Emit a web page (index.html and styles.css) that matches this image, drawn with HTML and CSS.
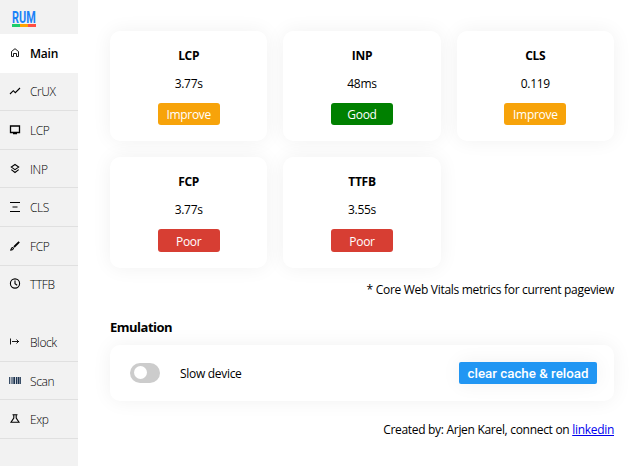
FILE: index.html
```html
<!DOCTYPE html>
<html lang="en">
<head>
  <meta charset="UTF-8" />
  <title>RUM</title>
  <link rel="stylesheet" href="styles.css">
</head>
<body>
  <nav class="sidebar">
    <div class="logo">
      <span class="logo-text">RUM</span>
      <span class="logo-bar"></span>
    </div>
    <a class="item active">
      <svg viewBox="0 0 12 12"><path d="M2.5 9.5V4.5L6 1.7L9.5 4.5v5H7.5V6.5h-3v3z" class="thin"/></svg>
      <span>Main</span>
    </a>
    <a class="item">
      <svg viewBox="0 0 12 12"><path d="M1 9l3.3-3.3l2 2L11 3"/></svg>
      <span>CrUX</span>
    </a>
    <a class="item">
      <svg viewBox="0 0 12 12"><path d="M1.5 2h9v6.5h-9zM4 9.6h4" class="mid"/></svg>
      <span>LCP</span>
    </a>
    <a class="item">
      <svg viewBox="0 0 12 12"><path d="M6 1.5l3.7 2.6l-3.7 2.6l-3.7-2.6zM2.3 6.6L6 9.5l3.7-2.9"/></svg>
      <span>INP</span>
    </a>
    <a class="item">
      <svg viewBox="0 0 12 12"><path d="M1 1.5h10M3.5 6h5M1 10.5h10"/></svg>
      <span>CLS</span>
    </a>
    <a class="item">
      <svg viewBox="0 0 12 12"><path d="M5 7l5.2-5.2" class="thick"/><path d="M1.2 10.2c1.3 0 .8-2.6 2.2-2.7c1.8 0 1.4 2.8-2.2 2.7z"/></svg>
      <span>FCP</span>
    </a>
    <a class="item last">
      <svg viewBox="0 0 12 12"><circle cx="6" cy="5.5" r="4.6"/><path d="M6 2.5v3.2l2.2 1.5"/></svg>
      <span>TTFB</span>
    </a>
    <a class="item">
      <svg viewBox="0 0 12 12"><path d="M1.5 2.5v6M3 5.5h7M7.5 3.5l2 2l-2 2" class="thin"/></svg>
      <span>Block</span>
    </a>
    <a class="item">
      <svg viewBox="0 0 12 12" class="barcode"><path d="M.7 2v7M3 2v7M7.5 2v7M11.3 2v7"/><path d="M5.2 2v7M9.5 2v7" class="thick"/></svg>
      <span>Scan</span>
    </a>
    <a class="item">
      <svg viewBox="0 0 12 12"><path d="M3.5 1.8h5M4.8 1.8V5L2 9.3h8L7.2 5V1.8"/></svg>
      <span>Exp</span>
    </a>
  </nav>

  <main class="content">
    <div class="cards">
      <div class="card">
        <h3>LCP</h3>
        <p>3.77s</p>
        <span class="badge improve">Improve</span>
      </div>
      <div class="card">
        <h3>INP</h3>
        <p>48ms</p>
        <span class="badge good">Good</span>
      </div>
      <div class="card">
        <h3>CLS</h3>
        <p>0.119</p>
        <span class="badge improve">Improve</span>
      </div>
      <div class="card">
        <h3>FCP</h3>
        <p>3.77s</p>
        <span class="badge poor">Poor</span>
      </div>
      <div class="card">
        <h3>TTFB</h3>
        <p>3.55s</p>
        <span class="badge poor">Poor</span>
      </div>
    </div>
    <div class="note"><span>* Core Web Vitals metrics for current pageview</span></div>

    <h2>Emulation</h2>
    <div class="panel">
      <span class="switch"></span>
      <span class="label">Slow device</span>
      <button class="reload">clear cache &amp; reload</button>
    </div>
    <div class="credits"><span>Created by: Arjen Karel, connect on <a href="#">linkedin</a></span></div>
  </main>
</body>
</html>
```
FILE: styles.css
```css
* {
  box-sizing: border-box;
}
body {
  margin: 0;
  display: flex;
  height: 466px;
  overflow: hidden;
  background: #fff;
  color: #000;
  font-family: "Open Sans", "Noto Sans", sans-serif;
  font-size: 12px;
  letter-spacing: -0.3px;
}
.sidebar {
  width: 78px;
  background: #f2f2f2;
  display: flex;
  flex-direction: column;
}
.logo {
  height: 34px;
  padding: 11px 0 0 12px;
  display: flex;
  flex-direction: column;
}
.logo-text {
  width: 24px;
  height: 13px;
  font-family: Roboto, sans-serif;
  font-size: 16px;
  font-weight: 700;
  line-height: 13px;
  letter-spacing: 0;
  color: #1a82f7;
  transform: scaleX(0.68);
  transform-origin: left;
}
.logo-bar {
  width: 24px;
  height: 3px;
  background: linear-gradient(to right, #1fcc6b 33%, #ffa400 33%, #ffa400 67%, #ff4e42 67%);
}
.item {
  display: flex;
  align-items: center;
  gap: 9px;
  height: 38.6px;
  flex-shrink: 0;
  padding-left: 9px;
  border-bottom: 1px solid #e0e0e0;
  font-weight: 300;
  letter-spacing: -0.4px;
}
.item span {
  padding-top: 1px;
}
.item.active span {
  padding-top: 2px;
}
.item.active {
  background: #fff;
  border-color: #fff;
  font-weight: 600;
  letter-spacing: -0.2px;
}
.item.last {
  border-color: transparent;
  margin-bottom: 19px;
}
.item.last span {
  padding-top: 0;
}
.item svg {
  width: 12px;
  height: 12px;
  fill: none;
  stroke: #000;
  stroke-width: 1.1;
}
.item .mid {
  stroke-width: 1.3;
}
.item .thick {
  stroke-width: 1.8;
}
.item .thin {
  stroke-width: 0.9;
}
.item .barcode {
  stroke: #1c3350;
}
.content {
  width: 536px;
  padding: 31px 0 0 32px;
}
.cards {
  display: grid;
  grid-template-columns: repeat(3, 1fr);
  grid-template-rows: 110px 111px;
  gap: 16px;
}
.card {
  padding-top: 16px;
  border-radius: 10px;
  background: #fff;
  box-shadow: 0 0 20px rgba(0, 0, 0, 0.06);
  text-align: center;
}
.card h3 {
  margin: 0 0 10px;
  font-size: 12px;
  line-height: 18px;
}
.card p {
  margin: 0 0 10px;
  line-height: 18px;
}
.badge {
  display: block;
  width: 62px;
  height: 22px;
  margin: 0 auto;
  border-radius: 3px;
  line-height: 23px;
  color: #fff;
}
.improve {
  background: #f7a30a;
}
.good {
  background: #008000;
}
.poor {
  height: 23px;
  line-height: 25px;
  background: #d73e33;
}
.note {
  margin-top: 13px;
  line-height: 18px;
  text-align: right;
}
h2 {
  margin: 18px 0 8px;
  font-size: 13px;
  line-height: 20px;
  letter-spacing: -0.5px;
}
.panel {
  display: flex;
  align-items: center;
  height: 56px;
  padding: 0 17px 0 20px;
  border-radius: 10px;
  box-shadow: 0 0 20px rgba(0, 0, 0, 0.06);
}
.switch {
  width: 30px;
  height: 20px;
  padding: 3px 4px;
  border-radius: 10px;
  background: #ccc;
}
.switch::before {
  content: "";
  display: block;
  width: 13px;
  height: 13px;
  border-radius: 50%;
  background: #fff;
}
.label {
  margin-left: 20px;
}
.reload {
  width: 138px;
  height: 22px;
  margin-left: auto;
  padding: 0;
  border: 0;
  border-radius: 2px;
  background: #2196f3;
  box-shadow: 0 0 20px rgba(0, 0, 0, 0.06);
  color: #fff;
  font-family: Roboto, sans-serif;
  font-size: 13.33px;
  font-weight: 500;
}
.credits {
  margin-top: 20px;
  line-height: 18px;
  text-align: right;
}
.credits a {
  color: #0000ee;
}
```
